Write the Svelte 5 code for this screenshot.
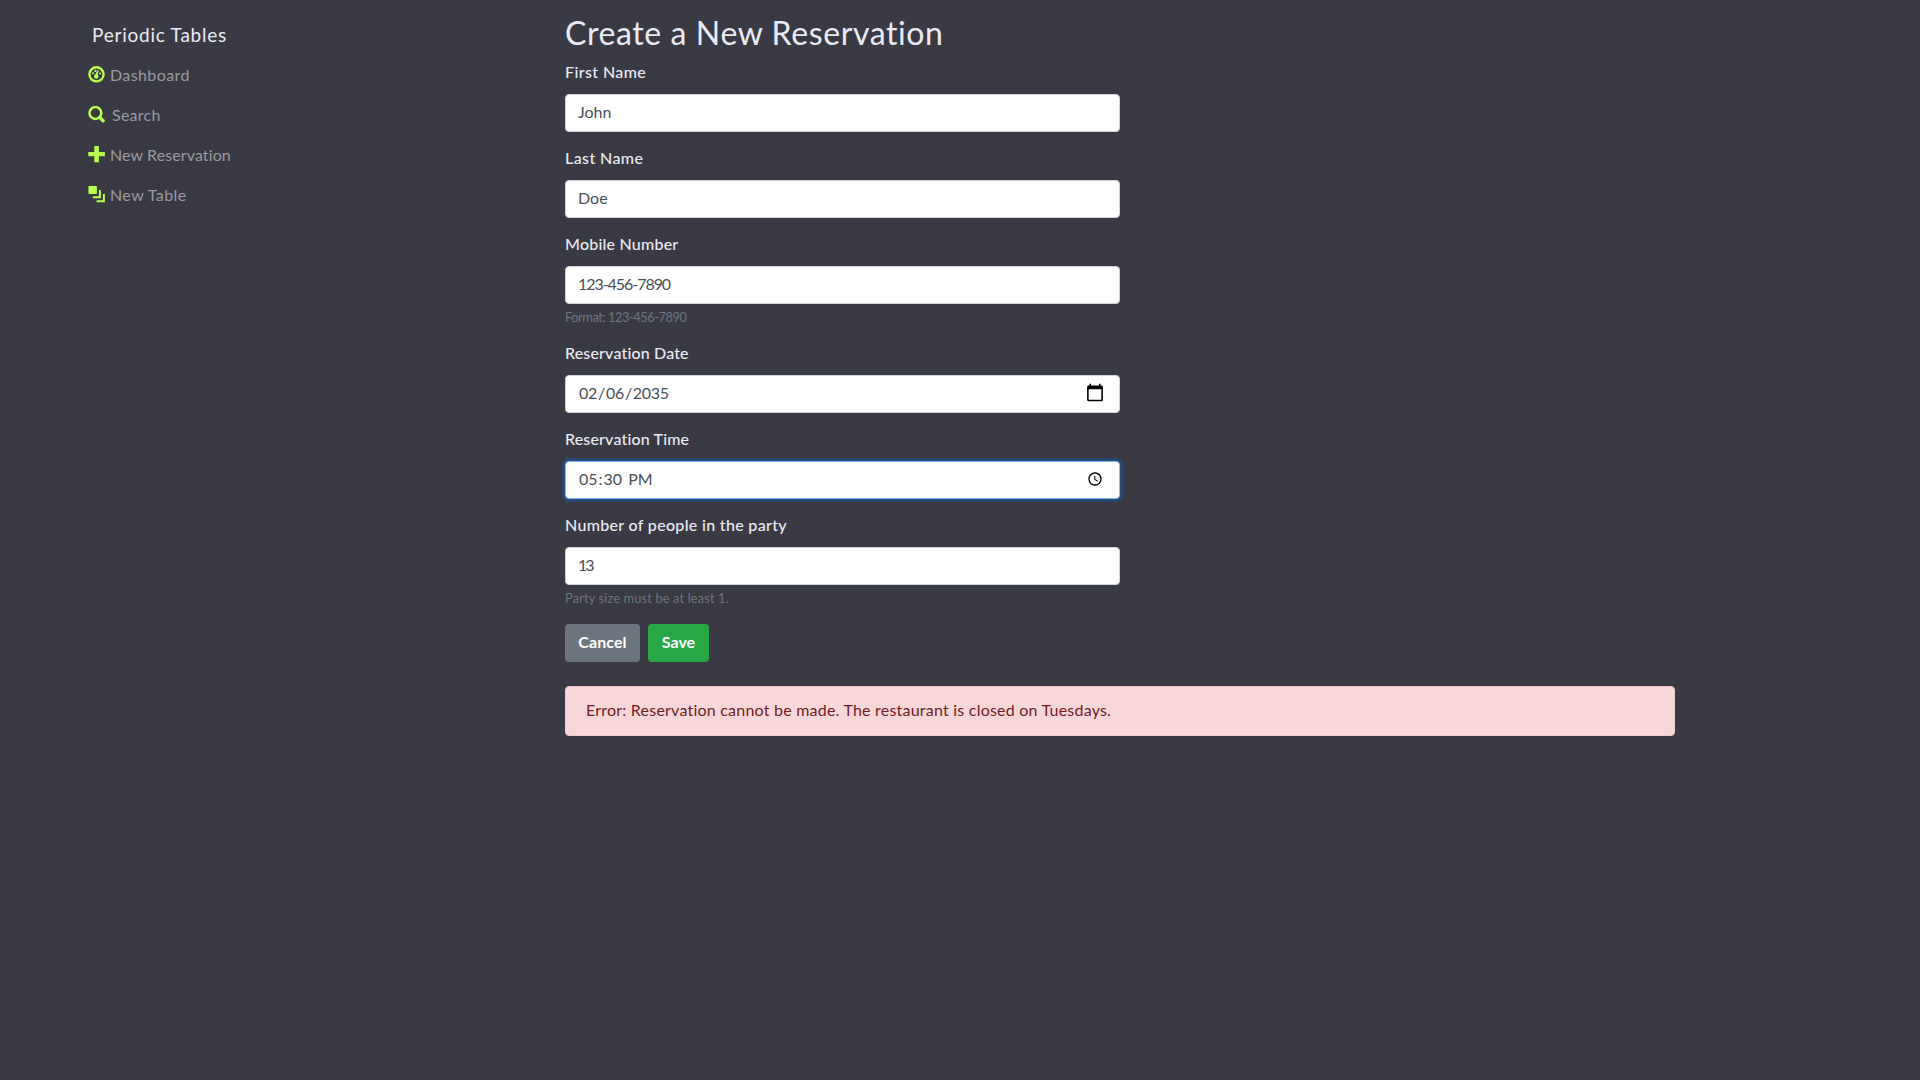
<script>
  const links = [
    { icon: 'dashboard', label: 'Dashboard' },
    { icon: 'search', label: 'Search' },
    { icon: 'plus', label: 'New Reservation' },
    { icon: 'layers', label: 'New Table' }
  ];
  const fields = [
    { id: 'first_name', label: 'First Name', type: 'text', value: 'John' },
    { id: 'last_name', label: 'Last Name', type: 'text', value: 'Doe' },
    { id: 'mobile_number', label: 'Mobile Number', type: 'tel', value: '123-456-7890', help: 'Format: 123-456-7890' },
    { id: 'reservation_date', label: 'Reservation Date', type: 'date', value: '2035-02-06' },
    { id: 'reservation_time', label: 'Reservation Time', type: 'time', value: '17:30', active: true },
    { id: 'people', label: 'Number of people in the party', type: 'text', value: '13', help: 'Party size must be at least 1.' }
  ];
</script>

<div class="page">
  <nav class="sidebar">
    <div class="brand">Periodic Tables</div>
    {#each links as link}
      <a class="link {link.icon}" href="#{link.icon}">
        <svg viewBox="0 0 17 17" width="17" height="17">
          {#if link.icon === 'dashboard'}
            <circle cx="8.5" cy="8.3" r="7.1" fill="none" stroke="currentColor" stroke-width="2.4" />
            <circle cx="5" cy="7.3" r="1.1" />
            <circle cx="7.3" cy="4.9" r="1.1" />
            <circle cx="12.1" cy="7.5" r="1.1" />
            <path d="M10.6 4 9.8 8.4 10.6 10.4A2.3 2.3 0 1 1 7.4 8.3L9.4 4Z" />
          {:else if link.icon === 'search'}
            <circle cx="7.4" cy="7" r="5.9" fill="none" stroke="currentColor" stroke-width="2.5" />
            <path d="m11.7 11.4 3.4 3.3" stroke="currentColor" stroke-width="3.4" stroke-linecap="round" />
          {:else if link.icon === 'plus'}
            <path d="M6.3 0h4.6v6h6v4.3h-6v6H6.3v-6h-6V6h6Z" />
          {:else}
            <path d="M0.5 0h8.4v8H0.5ZM10.9 4h2v8.2H4.8v-2h6.1ZM14.9 8h2v8.2H8.6v-2h6.3Z" />
          {/if}
        </svg>
        <span>{link.label}</span>
      </a>
    {/each}
  </nav>

  <main>
    <h1>Create a New Reservation</h1>
    <form>
      {#each fields as field}
        <div class="group {field.id}">
          <label for={field.id}>{field.label}</label>
          <input id={field.id} class:active={field.active} class={field.type} type={field.type} value={field.value} />
          {#if field.help}<small>{field.help}</small>{/if}
        </div>
      {/each}
      <div class="actions">
        <button type="button" class="cancel">Cancel</button>
        <button type="button" class="save">Save</button>
      </div>
    </form>
    <div class="alert">Error: Reservation cannot be made. The restaurant is closed on Tuesdays.</div>
  </main>
</div>

<style>
  :global(body) {
    background: #3a3a44;
  }
  .page, .page * {
    box-sizing: border-box;
  }
  .page {
    display: flex;
    min-height: 1080px;
    background: #3a3a44;
    color: #eaeaf5;
    font: 400 16px/24px Lato, sans-serif;
  }
  .sidebar {
    width: 565px;
    padding: 19px 0 0 88px;
  }
  .brand {
    height: 35px;
    padding-left: 4px;
    font-size: 19px;
    line-height: 31px;
    letter-spacing: 0.76px;
  }
  .link {
    display: flex;
    gap: 5px;
    height: 40px;
    padding-top: 8px;
    color: #9b9ba0;
    text-decoration: none;
    letter-spacing: 0.4px;
  }
  .link span {
    margin-top: 1px;
  }
  .link.search {
    gap: 7px;
    letter-spacing: 0.25px;
  }
  .link.plus {
    letter-spacing: 0.1px;
  }
  svg {
    margin-top: 4px;
    color: #b9ff4f;
    fill: currentColor;
  }
  main {
    width: 1110px;
    padding-top: 14px;
  }
  h1 {
    height: 48px;
    margin: 0;
    font-size: 32px;
    font-weight: 400;
    line-height: 38px;
    letter-spacing: 0.6px;
  }
  .group {
    margin-bottom: 16px;
  }
  label {
    display: block;
    height: 32px;
    line-height: 20px;
    font-weight: 500;
    letter-spacing: 0.4px;
  }
  .mobile_number label {
    letter-spacing: 0.22px;
  }
  .reservation_date label, .reservation_time label {
    letter-spacing: 0.16px;
  }
  .people label {
    letter-spacing: 0.32px;
  }
  input {
    display: block;
    width: 555px;
    height: 38px;
    padding: 5px 12px 7px;
    border: 1px solid #ced4da;
    border-radius: 4px;
    background: #fff;
    color: #495057;
    font: inherit;
    outline: none;
  }
  input.text, input.tel {
    padding: 4px 12px 8px;
  }
  .mobile_number input {
    letter-spacing: -1.05px;
  }
  .people input {
    letter-spacing: -2px;
  }
  input.date {
    letter-spacing: -0.3px;
  }
  input.date::-webkit-calendar-picker-indicator {
    width: 20px;
    height: 20px;
    padding: 0;
    margin-right: 2px;
  }
  input.active {
    border-color: #80bdff;
    box-shadow: 0 0 0 3px rgba(0, 123, 255, 0.25);
  }
  small {
    display: block;
    height: 23px;
    padding-top: 2px;
    color: #6c757d;
    font-size: 12.8px;
    line-height: 22px;
    letter-spacing: 0.15px;
  }
  .mobile_number small {
    letter-spacing: -0.43px;
  }
  .actions {
    display: flex;
    gap: 8px;
    margin-bottom: 24px;
  }
  button {
    height: 38px;
    padding: 0 0 3px;
    border: 0;
    border-radius: 4px;
    color: #fff;
    font: 700 16px/24px Lato, sans-serif;
  }
  .cancel {
    width: 75px;
    background: #6c757d;
    letter-spacing: 0.1px;
  }
  .save {
    width: 61px;
    background: #28a745;
  }
  .alert {
    height: 50px;
    padding: 11px 20px;
    border: 1px solid #f5c6cb;
    border-radius: 4px;
    background: #f8d7da;
    color: #721c24;
    letter-spacing: 0.22px;
  }
</style>
